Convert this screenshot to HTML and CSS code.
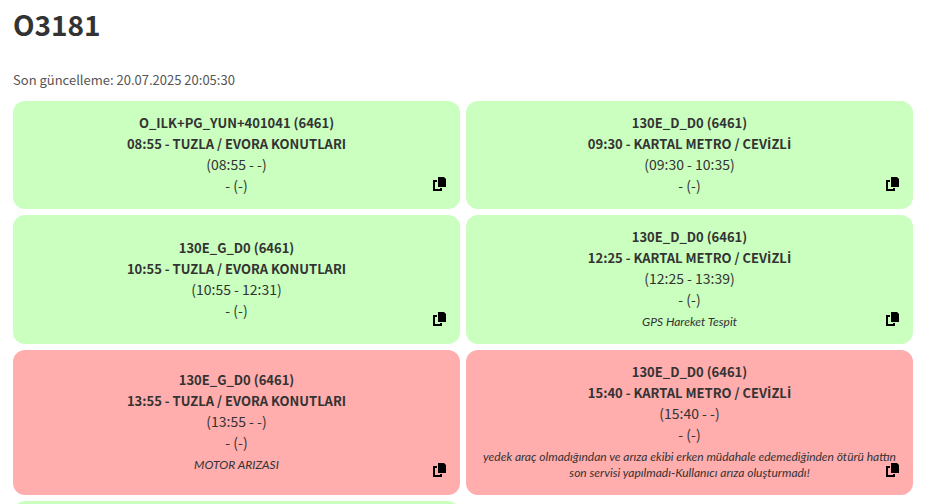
FILE: index.html
```html
<!DOCTYPE html>
<html lang="tr">
<head>
  <meta charset="UTF-8">
  <meta name="viewport" content="width=device-width, initial-scale=1.0">
  <title>O3181</title>
  <link rel="stylesheet" href="styles.css">
</head>
<body>
  <svg class="sprite" aria-hidden="true">
    <symbol id="copy" viewBox="0 0 14 14">
      <path d="M4 3H0v11h9v-3H7v1H2V5h2z"/>
      <path d="M5 0h6l2 2v8H5z"/>
    </symbol>
  </svg>

  <main class="page">
    <h1>O3181</h1>
    <p class="updated">Son güncelleme: 20.07.2025 20:05:30</p>

    <div class="grid">
      <div class="card green">
        <strong>O_ILK+PG_YUN+401041 (6461)</strong>
        <strong>08:55 - TUZLA / EVORA KONUTLARI</strong>
        <span>(08:55 - -)</span>
        <span>- (-)</span>
        <button class="copy" type="button" aria-label="Kopyala"><svg><use href="#copy"/></svg></button>
      </div>

      <div class="card green">
        <strong>130E_D_D0 (6461)</strong>
        <strong>09:30 - KARTAL METRO / CEV<span class="tr">İ</span>ZL<span class="tr">İ</span></strong>
        <span>(09:30 - 10:35)</span>
        <span>- (-)</span>
        <button class="copy" type="button" aria-label="Kopyala"><svg><use href="#copy"/></svg></button>
      </div>

      <div class="card green">
        <strong>130E_G_D0 (6461)</strong>
        <strong>10:55 - TUZLA / EVORA KONUTLARI</strong>
        <span>(10:55 - 12:31)</span>
        <span>- (-)</span>
        <button class="copy" type="button" aria-label="Kopyala"><svg><use href="#copy"/></svg></button>
      </div>

      <div class="card green">
        <strong>130E_D_D0 (6461)</strong>
        <strong>12:25 - KARTAL METRO / CEV<span class="tr">İ</span>ZL<span class="tr">İ</span></strong>
        <span>(12:25 - 13:39)</span>
        <span>- (-)</span>
        <em class="note">GPS Hareket Tespit</em>
        <button class="copy" type="button" aria-label="Kopyala"><svg><use href="#copy"/></svg></button>
      </div>

      <div class="card red">
        <strong>130E_G_D0 (6461)</strong>
        <strong>13:55 - TUZLA / EVORA KONUTLARI</strong>
        <span>(13:55 - -)</span>
        <span>- (-)</span>
        <em class="note">MOTOR ARIZASI</em>
        <button class="copy" type="button" aria-label="Kopyala"><svg><use href="#copy"/></svg></button>
      </div>

      <div class="card red">
        <strong>130E_D_D0 (6461)</strong>
        <strong>15:40 - KARTAL METRO / CEV<span class="tr">İ</span>ZL<span class="tr">İ</span></strong>
        <span>(15:40 - -)</span>
        <span>- (-)</span>
        <em class="note">yedek araç olmadığından ve arıza ekibi erken müdahale edemediğinden ötürü hattın son servisi yapılmadı-Kullanıcı arıza oluşturmadı!</em>
        <button class="copy" type="button" aria-label="Kopyala"><svg><use href="#copy"/></svg></button>
      </div>

      <div class="card green"></div>
    </div>
  </main>
</body>
</html>
```
FILE: styles.css
```css
* {
  box-sizing: border-box;
}

body {
  margin: 0;
  background: #fff;
  color: #333;
  font-family: "Noto Sans CJK SC", "Open Sans", sans-serif;
  font-size: 14px;
  line-height: 21px;
}

.sprite {
  display: none;
}

.page {
  height: 100vh;
  padding: 4px 16px 0 13px;
  overflow: hidden;
}

h1 {
  margin: 0;
  font-size: 28px;
  line-height: 40px;
}

.updated {
  margin: 25px 0 11px;
  color: #555;
  font-size: 13px;
}

.grid {
  display: grid;
  grid-template-columns: 1fr 1fr;
  gap: 6px;
}

.card {
  position: relative;
  display: flex;
  flex-direction: column;
  justify-content: center;
  min-height: 108px;
  padding: 11px 12px 13px;
  border-radius: 12px;
  text-align: center;
}

.card strong {
  font-size: 13px;
}

/* the main font has no dotted capital I */
.tr {
  font-family: "Open Sans", sans-serif;
  line-height: 1;
}

.green {
  background: #caffbf;
}

.red {
  background: #ffadad;
}

.note {
  margin: 4px 0 1px;
  font-family: Lato, sans-serif;
  font-size: 12px;
  line-height: 16px;
}

.copy {
  position: absolute;
  right: 13px;
  bottom: 18px;
  padding: 0;
  border: none;
  background: none;
  color: #000;
  cursor: pointer;
}

.copy svg {
  display: block;
  width: 14px;
  height: 14px;
  fill: currentColor;
}
```
